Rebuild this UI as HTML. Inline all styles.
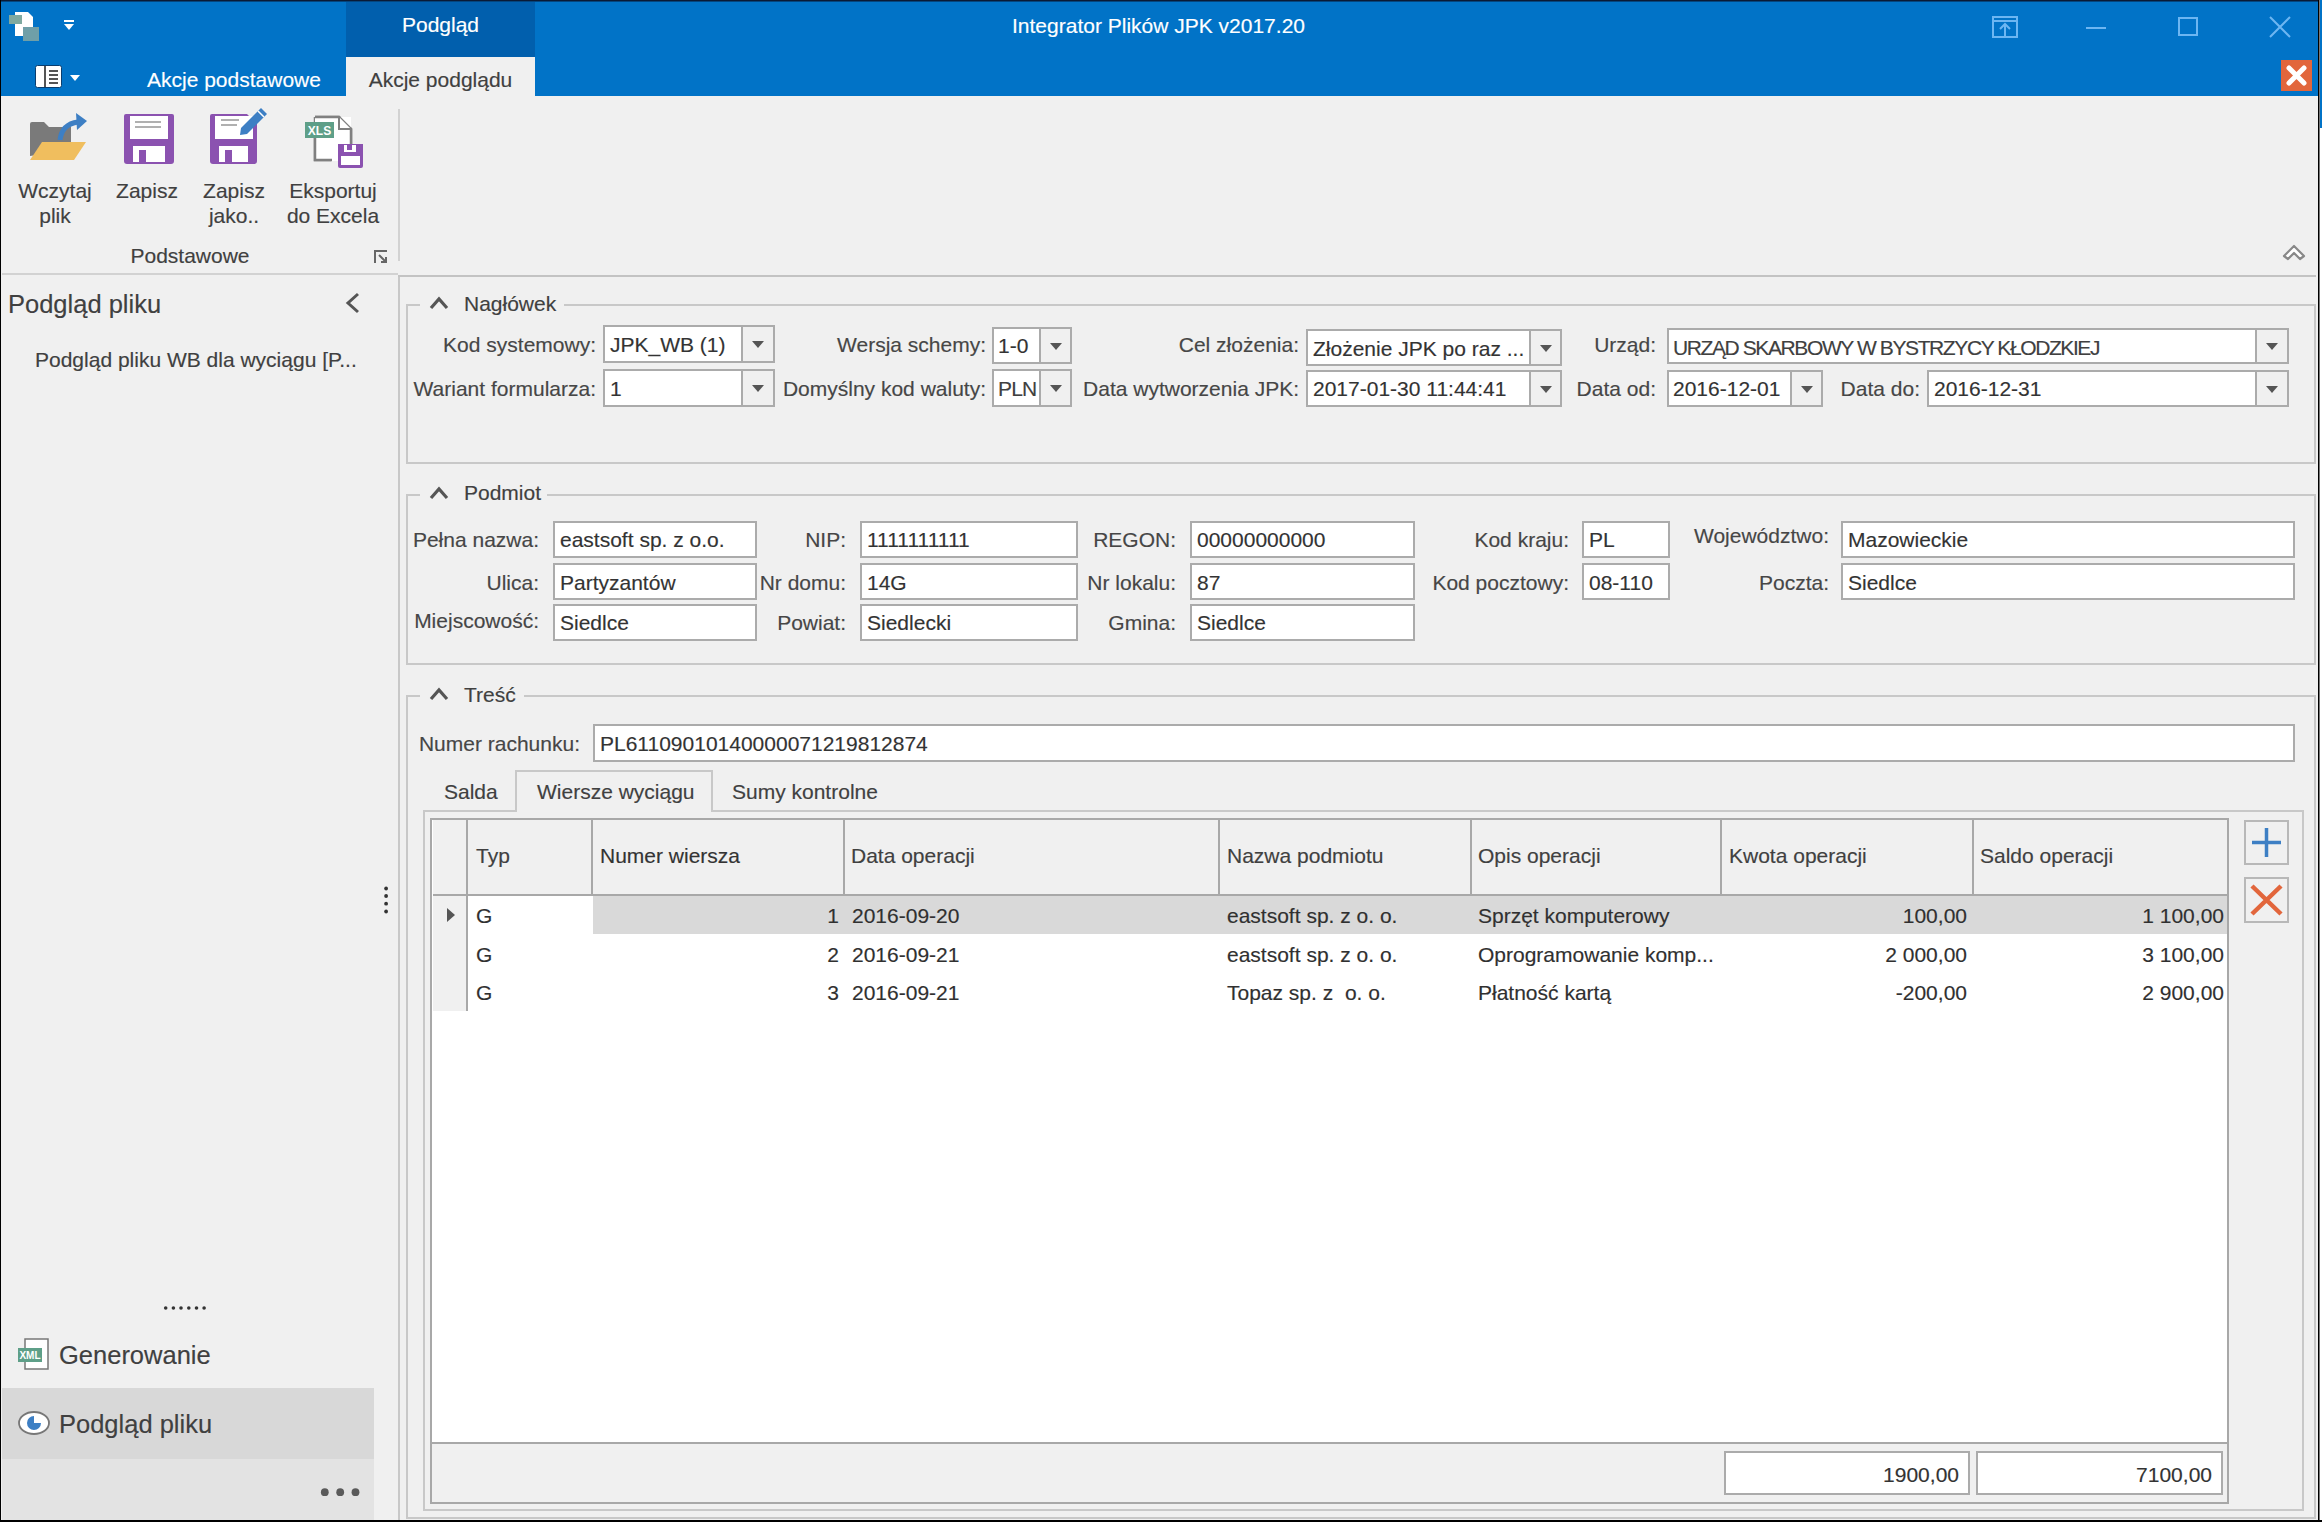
<!DOCTYPE html>
<html><head><meta charset="utf-8">
<style>
html,body{margin:0;padding:0;}
body{width:2322px;height:1522px;position:relative;overflow:hidden;background:#F0F0F0;font-family:"Liberation Sans",sans-serif;}
.a{position:absolute;}
.t{position:absolute;white-space:nowrap;font-size:21px;line-height:24px;color:#404040;-webkit-text-stroke:0.15px currentColor;}
.r{position:absolute;white-space:nowrap;font-size:21px;line-height:24px;color:#464646;text-align:right;-webkit-text-stroke:0.15px currentColor;}
.big{font-size:25.5px;line-height:30px;}
.box{position:absolute;background:#fff;border:2px solid #ABABAB;box-sizing:border-box;}
.btn{position:absolute;background:#F0F0F0;border-left:2px solid #ABABAB;box-sizing:border-box;top:0;bottom:0;right:0;}
.btn:after{content:"";position:absolute;left:50%;top:50%;margin-left:-6px;margin-top:-3px;border-left:6px solid transparent;border-right:6px solid transparent;border-top:7px solid #555;}
.grp{position:absolute;border:2px solid #C8C8C8;box-sizing:border-box;}
.gl{position:absolute;background:#F0F0F0;height:30px;}
.vt{position:absolute;top:0;width:2px;height:77px;background:#C8C8C8;}
</style></head><body>

<!-- ===== window frame / title bar ===== -->
<div class="a" style="left:0;top:0;width:2322px;height:96px;background:#0173C7;"></div>
<div class="a" style="left:0;top:0;width:2322px;height:1px;background:#0a1a35;"></div><div class="a" style="left:0;top:1px;width:2322px;height:1px;background:#04457e;"></div>
<div class="a" style="left:0;top:0;width:1px;height:1522px;background:#000;"></div>
<div class="a" style="left:2318px;top:0;width:1px;height:1522px;background:#000;"></div><div class="a" style="left:2319px;top:0;width:1px;height:1522px;background:#777;"></div>
<div class="a" style="left:2320px;top:0;width:2px;height:128px;background:#0173C7;"></div>
<div class="a" style="left:2320px;top:128px;width:2px;height:1394px;background:#fff;"></div>
<div class="a" style="left:0;top:1520px;width:2322px;height:2px;background:#000;"></div>

<!-- app icon -->
<svg class="a" style="left:8px;top:10px" width="34" height="34" viewBox="0 0 34 34">
 <path d="M7 2 H20 L25 7 V26 H7 Z" fill="#fff"/>
 <rect x="1" y="5" width="13" height="9" fill="#7fa9a0"/>
 <rect x="15" y="17" width="16" height="14" fill="#6f9fa8"/>
</svg>
<!-- QAT dropdown -->
<svg class="a" style="left:63px;top:19px" width="12" height="12" viewBox="0 0 12 12">
 <rect x="1" y="1" width="10" height="2" fill="#fff"/><path d="M1 5 H11 L6 11 Z" fill="#fff"/>
</svg>
<!-- backstage button -->
<svg class="a" style="left:34px;top:64px" width="50" height="26" viewBox="0 0 50 26">
 <rect x="1.5" y="1.5" width="26" height="22" rx="2" fill="#fff" stroke="#0a3d6e" stroke-width="1"/>
 <rect x="10" y="2" width="2" height="21" fill="#555"/>
 <rect x="15" y="6" width="9" height="2" fill="#555"/><rect x="15" y="10" width="9" height="2" fill="#555"/>
 <rect x="15" y="14" width="9" height="2" fill="#555"/><rect x="15" y="18" width="9" height="2" fill="#555"/>
 <path d="M36 11 H46 L41 17 Z" fill="#fff"/>
</svg>

<!-- contextual tab header -->
<div class="a" style="left:346px;top:2px;width:189px;height:55px;background:#015FAD;"></div>
<div class="t" style="left:346px;width:189px;text-align:center;top:13px;color:#fff;">Podgląd</div>
<div class="a" style="left:346px;top:57px;width:189px;height:40px;background:#F0F0F0;"></div>
<div class="t" style="left:346px;width:189px;text-align:center;top:68px;">Akcje podglądu</div>
<div class="t" style="left:147px;top:68px;color:#fff;">Akcje podstawowe</div>
<div class="t" style="left:1012px;top:14px;color:#fff;">Integrator Plików JPK v2017.20</div>

<!-- window buttons -->
<svg class="a" style="left:1990px;top:14px" width="30" height="26" viewBox="0 0 30 26">
 <g stroke="#6db6f2" stroke-width="2" fill="none">
 <rect x="3" y="3" width="24" height="20"/><line x1="3" y1="7" x2="27" y2="7"/>
 <line x1="15" y1="10" x2="15" y2="23"/><path d="M10 15 L15 10 L20 15"/></g>
</svg>
<div class="a" style="left:2086px;top:27px;width:20px;height:2px;background:#6db6f2;"></div>
<div class="a" style="left:2178px;top:17px;width:20px;height:19px;border:2px solid #6db6f2;box-sizing:border-box;"></div>
<svg class="a" style="left:2268px;top:15px" width="24" height="24" viewBox="0 0 24 24">
 <path d="M2 2 L22 22 M22 2 L2 22" stroke="#6db6f2" stroke-width="2"/>
</svg>
<!-- orange close -->
<div class="a" style="left:2281px;top:60px;width:31px;height:31px;background:#E2663C;"></div>
<svg class="a" style="left:2281px;top:60px" width="31" height="31" viewBox="0 0 31 31">
 <path d="M8 8 L23 23 M23 8 L8 23" stroke="#fff" stroke-width="5" stroke-linecap="round"/>
</svg>

<!-- ===== ribbon ===== -->
<!-- folder icon -->
<svg class="a" style="left:28px;top:110px" width="62" height="54" viewBox="0 0 62 54">
 <path d="M2 14 Q2 12 4 12 H16 L21 17 H43 V40 L2 46 Z" fill="#7a7a7a"/>
 <path d="M2 50 L14 32 H58 L46 50 Z" fill="#F0BE5E"/>
 <path d="M32 30 Q34 14 50 12" stroke="#3d7fc4" stroke-width="5" fill="none"/>
 <path d="M48 3 L59 11 L49 20 Z" fill="#3d7fc4"/>
</svg>
<!-- floppy -->
<svg class="a" style="left:123px;top:113px" width="52" height="52" viewBox="0 0 52 52">
 <path d="M1 3 Q1 1 3 1 H49 Q51 1 51 3 V48 Q51 51 48 51 H4 Q1 51 1 48 Z" fill="#8B52B0"/>
 <rect x="7" y="3" width="38" height="23" fill="#fff"/>
 <rect x="12" y="8" width="26" height="2" fill="#b0b0b0"/><rect x="12" y="13" width="26" height="2" fill="#b0b0b0"/>
 <rect x="10" y="33" width="32" height="16" fill="#fff"/>
 <rect x="16" y="37" width="7" height="12" fill="#8B52B0"/>
</svg>
<!-- floppy with pencil -->
<svg class="a" style="left:209px;top:106px" width="60" height="60" viewBox="0 0 60 60">
 <path d="M1 10 Q1 8 3 8 H38 L48 18 V55 Q48 58 45 58 H4 Q1 58 1 55 Z" fill="#8B52B0"/>
 <rect x="6" y="10" width="38" height="23" fill="#fff"/>
 <rect x="12" y="13" width="18" height="2" fill="#b0b0b0"/><rect x="12" y="18" width="16" height="2" fill="#b0b0b0"/>
 <rect x="10" y="40" width="29" height="16" fill="#fff"/>
 <rect x="16" y="44" width="7" height="12" fill="#8B52B0"/>
 <path d="M32 22 L52 2 L58 8 L38 28 L31 29 Z" fill="#3d7fc4"/>
 <path d="M49 5 L55 11" stroke="#fff" stroke-width="1.5"/>
</svg>
<!-- export to excel -->
<svg class="a" style="left:304px;top:114px" width="62" height="56" viewBox="0 0 62 56">
 <path d="M11 3 H35 L47 15 V30" stroke="#808080" stroke-width="2.5" fill="#fff"/>
 <path d="M11 3 V46 H27" stroke="#808080" stroke-width="2.5" fill="none"/>
 <rect x="11" y="3" width="36" height="44" fill="#fff"/>
 <path d="M11 3 H35 L47 15 V30 M11 24 V46 H28" stroke="#808080" stroke-width="2.5" fill="none"/>
 <path d="M35 3 V15 H47" stroke="#808080" stroke-width="2" fill="#fff"/>
 <rect x="1" y="8" width="29" height="16" fill="#5E9F88"/>
 <text x="15.5" y="21" font-family="Liberation Sans" font-weight="bold" font-size="12" fill="#fff" text-anchor="middle">XLS</text>
 <path d="M34 30 H59 V52 Q59 54 57 54 H36 Q34 54 34 52 Z" fill="#8B52B0"/>
 <rect x="37" y="42" width="19" height="9" fill="#fff"/>
 <rect x="40" y="31" width="12" height="7" fill="#fff"/><rect x="43" y="31" width="5" height="5" fill="#8B52B0"/>
</svg>

<div class="t" style="left:0;width:110px;text-align:center;top:179px;">Wczytaj</div>
<div class="t" style="left:0;width:110px;text-align:center;top:204px;">plik</div>
<div class="t" style="left:92px;width:110px;text-align:center;top:179px;">Zapisz</div>
<div class="t" style="left:179px;width:110px;text-align:center;top:179px;">Zapisz</div>
<div class="t" style="left:179px;width:110px;text-align:center;top:204px;">jako..</div>
<div class="t" style="left:278px;width:110px;text-align:center;top:179px;">Eksportuj</div>
<div class="t" style="left:278px;width:110px;text-align:center;top:204px;">do Excela</div>
<div class="t" style="left:90px;width:200px;text-align:center;top:244px;">Podstawowe</div>
<svg class="a" style="left:373px;top:249px" width="16" height="16" viewBox="0 0 16 16">
 <path d="M2 14 V2 H14" stroke="#666" stroke-width="2" fill="none"/>
 <path d="M6 6 L13 13 M8 13 H13 V8" stroke="#666" stroke-width="2" fill="none"/>
</svg>
<div class="a" style="left:398px;top:109px;width:2px;height:152px;background:#D2D2D2;"></div>
<svg class="a" style="left:2282px;top:242px" width="24" height="20" viewBox="0 0 24 20">
 <path d="M2 14 L12 4 L22 14 L18 17 L12 11 L6 17 Z" stroke="#888" stroke-width="2.2" fill="#fff" stroke-linejoin="round"/>
</svg>
<div class="a" style="left:2px;top:273px;width:396px;height:2px;background:#D2D2D2;"></div>
<div class="a" style="left:398px;top:275px;width:1918px;height:2px;background:#C3C3C3;"></div>

<!-- ===== left navigation pane ===== -->
<div class="t big" style="left:8px;top:289px;">Podgląd pliku</div>
<svg class="a" style="left:343px;top:292px" width="20" height="22" viewBox="0 0 20 22">
 <path d="M15 2 L5 11 L15 20" stroke="#555" stroke-width="3" fill="none"/>
</svg>
<div class="t" style="left:35px;top:348px;">Podgląd pliku WB dla wyciągu [P...</div>
<div class="a" style="left:398px;top:277px;width:2px;height:1243px;background:#C8C8C8;"></div>
<svg class="a" style="left:380px;top:880px" width="12" height="40" viewBox="0 0 12 40"><g fill="#333"><circle cx="6.1" cy="8.5" r="1.9"/><circle cx="6.1" cy="16" r="1.9"/><circle cx="6.1" cy="23.7" r="1.9"/><circle cx="6.1" cy="31.5" r="1.9"/></g></svg>
<svg class="a" style="left:160px;top:1300px" width="50" height="16" viewBox="0 0 50 16"><g fill="#333"><circle cx="5.7" cy="8" r="1.8"/><circle cx="13.4" cy="8" r="1.8"/><circle cx="21" cy="8" r="1.8"/><circle cx="28.8" cy="8" r="1.8"/><circle cx="36.5" cy="8" r="1.8"/><circle cx="44.1" cy="8" r="1.8"/></g></svg>
<svg class="a" style="left:16px;top:1337px" width="34" height="34" viewBox="0 0 34 34">
 <path d="M9 2 H32 V32 H9 Z" stroke="#777" stroke-width="1.5" fill="#fff"/>
 <rect x="2" y="11" width="24" height="14" fill="#5E9F88"/>
 <text x="14" y="22" font-family="Liberation Sans" font-weight="bold" font-size="10" fill="#fff" text-anchor="middle">XML</text>
</svg>
<div class="t big" style="left:59px;top:1340px;">Generowanie</div>
<div class="a" style="left:2px;top:1388px;width:372px;height:71px;background:#D8D8D8;"></div>
<div class="a" style="left:2px;top:1459px;width:372px;height:61px;background:#E3E3E3;"></div>
<svg class="a" style="left:17px;top:1409px" width="34" height="28" viewBox="0 0 34 28">
 <ellipse cx="17" cy="14" rx="15" ry="11" fill="#fff" stroke="#777" stroke-width="1.8"/>
 <path d="M17 7 A7 7 0 1 0 24 14 H17 Z" fill="#3d7fc4"/>
</svg>
<div class="t big" style="left:59px;top:1409px;">Podgląd pliku</div>
<svg class="a" style="left:314px;top:1482px" width="52" height="20" viewBox="0 0 52 20"><g fill="#5a5a5a"><circle cx="10.8" cy="10.2" r="3.9"/><circle cx="26.2" cy="10.2" r="3.9"/><circle cx="41.5" cy="10.2" r="3.9"/></g></svg>

<!-- ===== content ===== -->
<div class="grp" style="left:406px;top:304px;width:1910px;height:160px;"></div>
<div class="gl" style="left:420px;top:290px;width:144px;"></div>
<svg class="a" style="left:429px;top:295px" width="20" height="16" viewBox="0 0 20 16"><path d="M2 13 L10 4 L18 13" stroke="#555" stroke-width="3.2" fill="none"/></svg>
<div class="t" style="left:464px;top:292px;">Nagłówek</div>
<div class="r" style="right:1726px;top:333px;">Kod systemowy:</div>
<div class="r" style="right:1726px;top:377px;">Wariant formularza:</div>
<div class="box" style="left:603px;top:325px;width:172px;height:38px;"><div class="btn" style="width:32px"></div></div>
<div class="box" style="left:603px;top:369px;width:172px;height:38px;"><div class="btn" style="width:32px"></div></div>
<div class="t" style="left:610px;top:333px;color:#333;">JPK_WB (1)</div>
<div class="t" style="left:610px;top:377px;color:#333;">1</div>
<div class="r" style="right:1336px;top:333px;">Wersja schemy:</div>
<div class="r" style="right:1336px;top:377px;">Domyślny kod waluty:</div>
<div class="box" style="left:992px;top:327px;width:80px;height:37px;"><div class="btn" style="width:31px"></div></div>
<div class="box" style="left:992px;top:369px;width:80px;height:38px;"><div class="btn" style="width:31px"></div></div>
<div class="t" style="left:998px;top:334px;color:#333;">1-0</div>
<div class="t" style="left:998px;top:377px;letter-spacing:-0.8px;">PLN</div>
<div class="r" style="right:1023px;top:333px;">Cel złożenia:</div>
<div class="r" style="right:1023px;top:377px;">Data wytworzenia JPK:</div>
<div class="box" style="left:1306px;top:329px;width:256px;height:37px;"><div class="btn" style="width:31px"></div></div>
<div class="box" style="left:1306px;top:370px;width:256px;height:37px;"><div class="btn" style="width:31px"></div></div>
<div class="t" style="left:1313px;top:337px;color:#333;">Złożenie JPK po raz ...</div>
<div class="t" style="left:1313px;top:377px;color:#333;">2017-01-30 11:44:41</div>
<div class="r" style="right:666px;top:333px;">Urząd:</div>
<div class="r" style="right:666px;top:377px;">Data od:</div>
<div class="box" style="left:1667px;top:328px;width:622px;height:36px;"><div class="btn" style="width:32px"></div></div>
<div class="box" style="left:1667px;top:370px;width:156px;height:37px;"><div class="btn" style="width:31px"></div></div>
<div class="t" style="left:1673px;top:336px;letter-spacing:-1.4px;">URZĄD SKARBOWY W BYSTRZYCY KŁODZKIEJ</div>
<div class="t" style="left:1673px;top:377px;color:#333;">2016-12-01</div>
<div class="r" style="right:402px;top:377px;">Data do:</div>
<div class="box" style="left:1927px;top:370px;width:362px;height:37px;"><div class="btn" style="width:32px"></div></div>
<div class="t" style="left:1934px;top:377px;color:#333;">2016-12-31</div>
<div class="grp" style="left:406px;top:494px;width:1910px;height:171px;"></div>
<div class="gl" style="left:420px;top:480px;width:127px;"></div>
<svg class="a" style="left:429px;top:485px" width="20" height="16" viewBox="0 0 20 16"><path d="M2 13 L10 4 L18 13" stroke="#555" stroke-width="3.2" fill="none"/></svg>
<div class="t" style="left:464px;top:481px;">Podmiot</div>
<div class="r" style="right:1783px;top:528px;">Pełna nazwa:</div>
<div class="box" style="left:553px;top:521px;width:204px;height:37px;"></div>
<div class="t" style="left:560px;top:528px;color:#333;">eastsoft sp. z o.o.</div>
<div class="r" style="right:1783px;top:571px;">Ulica:</div>
<div class="box" style="left:553px;top:563px;width:204px;height:37px;"></div>
<div class="t" style="left:560px;top:571px;color:#333;">Partyzantów</div>
<div class="r" style="right:1783px;top:609px;">Miejscowość:</div>
<div class="box" style="left:553px;top:604px;width:204px;height:37px;"></div>
<div class="t" style="left:560px;top:611px;color:#333;">Siedlce</div>
<div class="r" style="right:1476px;top:528px;">NIP:</div>
<div class="box" style="left:860px;top:521px;width:218px;height:37px;"></div>
<div class="t" style="left:867px;top:528px;color:#333;">1111111111</div>
<div class="r" style="right:1476px;top:571px;">Nr domu:</div>
<div class="box" style="left:860px;top:563px;width:218px;height:37px;"></div>
<div class="t" style="left:867px;top:571px;color:#333;">14G</div>
<div class="r" style="right:1476px;top:611px;">Powiat:</div>
<div class="box" style="left:860px;top:604px;width:218px;height:37px;"></div>
<div class="t" style="left:867px;top:611px;color:#333;">Siedlecki</div>
<div class="r" style="right:1146px;top:528px;">REGON:</div>
<div class="box" style="left:1190px;top:521px;width:225px;height:37px;"></div>
<div class="t" style="left:1197px;top:528px;color:#333;">00000000000</div>
<div class="r" style="right:1146px;top:571px;">Nr lokalu:</div>
<div class="box" style="left:1190px;top:563px;width:225px;height:37px;"></div>
<div class="t" style="left:1197px;top:571px;color:#333;">87</div>
<div class="r" style="right:1146px;top:611px;">Gmina:</div>
<div class="box" style="left:1190px;top:604px;width:225px;height:37px;"></div>
<div class="t" style="left:1197px;top:611px;color:#333;">Siedlce</div>
<div class="r" style="right:753px;top:528px;">Kod kraju:</div>
<div class="box" style="left:1582px;top:521px;width:88px;height:37px;"></div>
<div class="t" style="left:1589px;top:528px;color:#333;">PL</div>
<div class="r" style="right:753px;top:571px;">Kod pocztowy:</div>
<div class="box" style="left:1582px;top:563px;width:88px;height:37px;"></div>
<div class="t" style="left:1589px;top:571px;color:#333;">08-110</div>
<div class="r" style="right:493px;top:524px;">Województwo:</div>
<div class="box" style="left:1841px;top:521px;width:454px;height:37px;"></div>
<div class="t" style="left:1848px;top:528px;color:#333;">Mazowieckie</div>
<div class="r" style="right:493px;top:571px;">Poczta:</div>
<div class="box" style="left:1841px;top:563px;width:454px;height:37px;"></div>
<div class="t" style="left:1848px;top:571px;color:#333;">Siedlce</div>
<div class="grp" style="left:406px;top:695px;width:1910px;height:824px;"></div>
<div class="gl" style="left:420px;top:681px;width:104px;"></div>
<svg class="a" style="left:429px;top:686px" width="20" height="16" viewBox="0 0 20 16"><path d="M2 13 L10 4 L18 13" stroke="#555" stroke-width="3.2" fill="none"/></svg>
<div class="t" style="left:464px;top:683px;">Treść</div>
<div class="r" style="right:1742px;top:732px;">Numer rachunku:</div>
<div class="box" style="left:593px;top:724px;width:1702px;height:38px;"></div>
<div class="t" style="left:600px;top:732px;color:#333;">PL61109010140000071219812874</div>
<div class="a" style="left:423px;top:810px;width:1881px;height:701px;border:2px solid #C8C8C8;box-sizing:border-box;"></div>
<div class="a" style="left:515px;top:770px;width:198px;height:42px;border:2px solid #C8C8C8;border-bottom:none;background:#F0F0F0;box-sizing:border-box;"></div>
<div class="t" style="left:444px;top:780px;">Salda</div>
<div class="t" style="left:537px;top:780px;">Wiersze wyciągu</div>
<div class="t" style="left:732px;top:780px;">Sumy kontrolne</div>
<div class="a" style="left:430px;top:818px;width:1799px;height:686px;border:2px solid #A8A8A8;box-sizing:border-box;background:#fff;"></div>
<div class="a" style="left:433px;top:820px;width:1794px;height:75px;background:#F0F0F0;"></div>
<div class="a" style="left:433px;top:894px;width:1794px;height:2px;background:#A8A8A8;"></div>
<div class="a" style="left:433px;top:896px;width:34px;height:115px;background:#F0F0F0;"></div>
<div class="a" style="left:466px;top:820px;width:2px;height:191px;background:#A8A8A8;"></div>
<div class="a" style="left:591px;top:820px;width:2px;height:75px;background:#A8A8A8;"></div>
<div class="a" style="left:843px;top:820px;width:2px;height:75px;background:#A8A8A8;"></div>
<div class="a" style="left:1218px;top:820px;width:2px;height:75px;background:#A8A8A8;"></div>
<div class="a" style="left:1470px;top:820px;width:2px;height:75px;background:#A8A8A8;"></div>
<div class="a" style="left:1720px;top:820px;width:2px;height:75px;background:#A8A8A8;"></div>
<div class="a" style="left:1972px;top:820px;width:2px;height:75px;background:#A8A8A8;"></div>
<div class="t" style="left:476px;top:844px;">Typ</div>
<div class="t" style="left:600px;top:844px;color:#333;">Numer wiersza</div>
<div class="t" style="left:851px;top:844px;">Data operacji</div>
<div class="t" style="left:1227px;top:844px;">Nazwa podmiotu</div>
<div class="t" style="left:1478px;top:844px;">Opis operacji</div>
<div class="t" style="left:1729px;top:844px;">Kwota operacji</div>
<div class="t" style="left:1980px;top:844px;">Saldo operacji</div>
<div class="a" style="left:593px;top:896px;width:1634px;height:38px;background:#D9D9D9;"></div>
<svg class="a" style="left:445px;top:906px" width="12" height="18" viewBox="0 0 12 18"><path d="M2 2 L10 9 L2 16 Z" fill="#555"/></svg>
<div class="t" style="left:476px;top:904px;color:#303030">G</div>
<div class="r" style="right:1483px;top:904px;color:#303030">1</div>
<div class="t" style="left:852px;top:904px;color:#303030">2016-09-20</div>
<div class="t" style="left:1227px;top:904px;color:#303030">eastsoft sp. z o. o.</div>
<div class="t" style="left:1478px;top:904px;color:#303030">Sprzęt komputerowy</div>
<div class="r" style="right:355px;top:904px;color:#303030">100,00</div>
<div class="r" style="right:98px;top:904px;color:#303030">1 100,00</div>
<div class="t" style="left:476px;top:943px;color:#303030">G</div>
<div class="r" style="right:1483px;top:943px;color:#303030">2</div>
<div class="t" style="left:852px;top:943px;color:#303030">2016-09-21</div>
<div class="t" style="left:1227px;top:943px;color:#303030">eastsoft sp. z o. o.</div>
<div class="t" style="left:1478px;top:943px;color:#303030">Oprogramowanie komp...</div>
<div class="r" style="right:355px;top:943px;color:#303030">2 000,00</div>
<div class="r" style="right:98px;top:943px;color:#303030">3 100,00</div>
<div class="t" style="left:476px;top:981px;color:#303030">G</div>
<div class="r" style="right:1483px;top:981px;color:#303030">3</div>
<div class="t" style="left:852px;top:981px;color:#303030">2016-09-21</div>
<div class="t" style="left:1227px;top:981px;color:#303030">Topaz sp. z&nbsp; o. o.</div>
<div class="t" style="left:1478px;top:981px;color:#303030">Płatność kartą</div>
<div class="r" style="right:355px;top:981px;color:#303030">-200,00</div>
<div class="r" style="right:98px;top:981px;color:#303030">2 900,00</div>
<div class="a" style="left:432px;top:1442px;width:1795px;height:60px;background:#F0F0F0;border-top:2px solid #A8A8A8;box-sizing:border-box;"></div>
<div class="box" style="left:1724px;top:1451px;width:246px;height:44px;"></div>
<div class="box" style="left:1976px;top:1451px;width:247px;height:44px;"></div>
<div class="r" style="right:363px;top:1463px;color:#333;">1900,00</div>
<div class="r" style="right:110px;top:1463px;color:#333;">7100,00</div>
<div class="a" style="left:2244px;top:820px;width:45px;height:45px;border:2px solid #B8B8B8;box-sizing:border-box;"></div>
<svg class="a" style="left:2244px;top:820px" width="45" height="45" viewBox="0 0 45 45"><path d="M22.5 8 V37 M8 22.5 H37" stroke="#3d7fc4" stroke-width="3.5"/></svg>
<div class="a" style="left:2244px;top:877px;width:45px;height:46px;border:2px solid #B8B8B8;box-sizing:border-box;"></div>
<svg class="a" style="left:2244px;top:877px" width="45" height="46" viewBox="0 0 45 46"><path d="M8 9 L37 37 M37 9 L8 37" stroke="#E2663C" stroke-width="4.5"/></svg>
</body></html>
